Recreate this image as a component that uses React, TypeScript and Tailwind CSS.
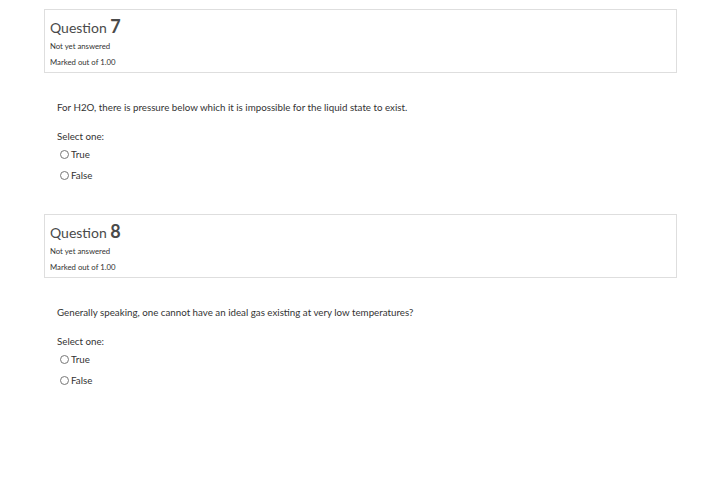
import React from "react";

function Radio({ label }: { label: string }) {
  return (
    <div className="flex items-center h-[21px]">
      <span className="ml-[3px] w-[9px] h-[9px] rounded-full border border-[#777] bg-white" />
      <span className="ml-[2px] text-[9.75px] text-[#333]">{label}</span>
    </div>
  );
}

function Question({ n, text }: { n: number; text: string }) {
  return (
    <div>
      <div className="h-[64px] border border-[#dedede] pl-[5px] pt-[6px]">
        <div className="h-[20px] leading-[20px] text-[#4a4a4a] whitespace-nowrap">
          <span className="text-[14px]">Question </span>
          <span className="text-[18px] font-bold">{n}</span>
        </div>
        <div className="mt-[2px] text-[7.75px] leading-[16px] text-[#333]">Not yet answered</div>
        <div className="text-[7.75px] leading-[16px] text-[#333]">Marked out of 1.00</div>
      </div>
      <div className="pl-[13px]">
        <div className="mt-[27px] text-[9.75px] leading-[14px] text-[#333]">{text}</div>
        <div className="mt-[15px] text-[9.75px] leading-[14px] text-[#333]">Select one:</div>
        <div className="mt-[1px]">
          <Radio label="True" />
          <Radio label="False" />
        </div>
      </div>
    </div>
  );
}

export default function App() {
  return (
    <div
      className="w-[720px] h-[497px] bg-white pt-[9px] pl-[44px] pr-[43px]"
      style={{ fontFamily: "Lato, 'Liberation Sans', sans-serif" }}
    >
      <Question
        n={7}
        text="For H2O, there is pressure below which it is impossible for the liquid state to exist."
      />
      <div className="h-[28px]" />
      <Question
        n={8}
        text="Generally speaking, one cannot have an ideal gas existing at very low temperatures?"
      />
    </div>
  );
}
